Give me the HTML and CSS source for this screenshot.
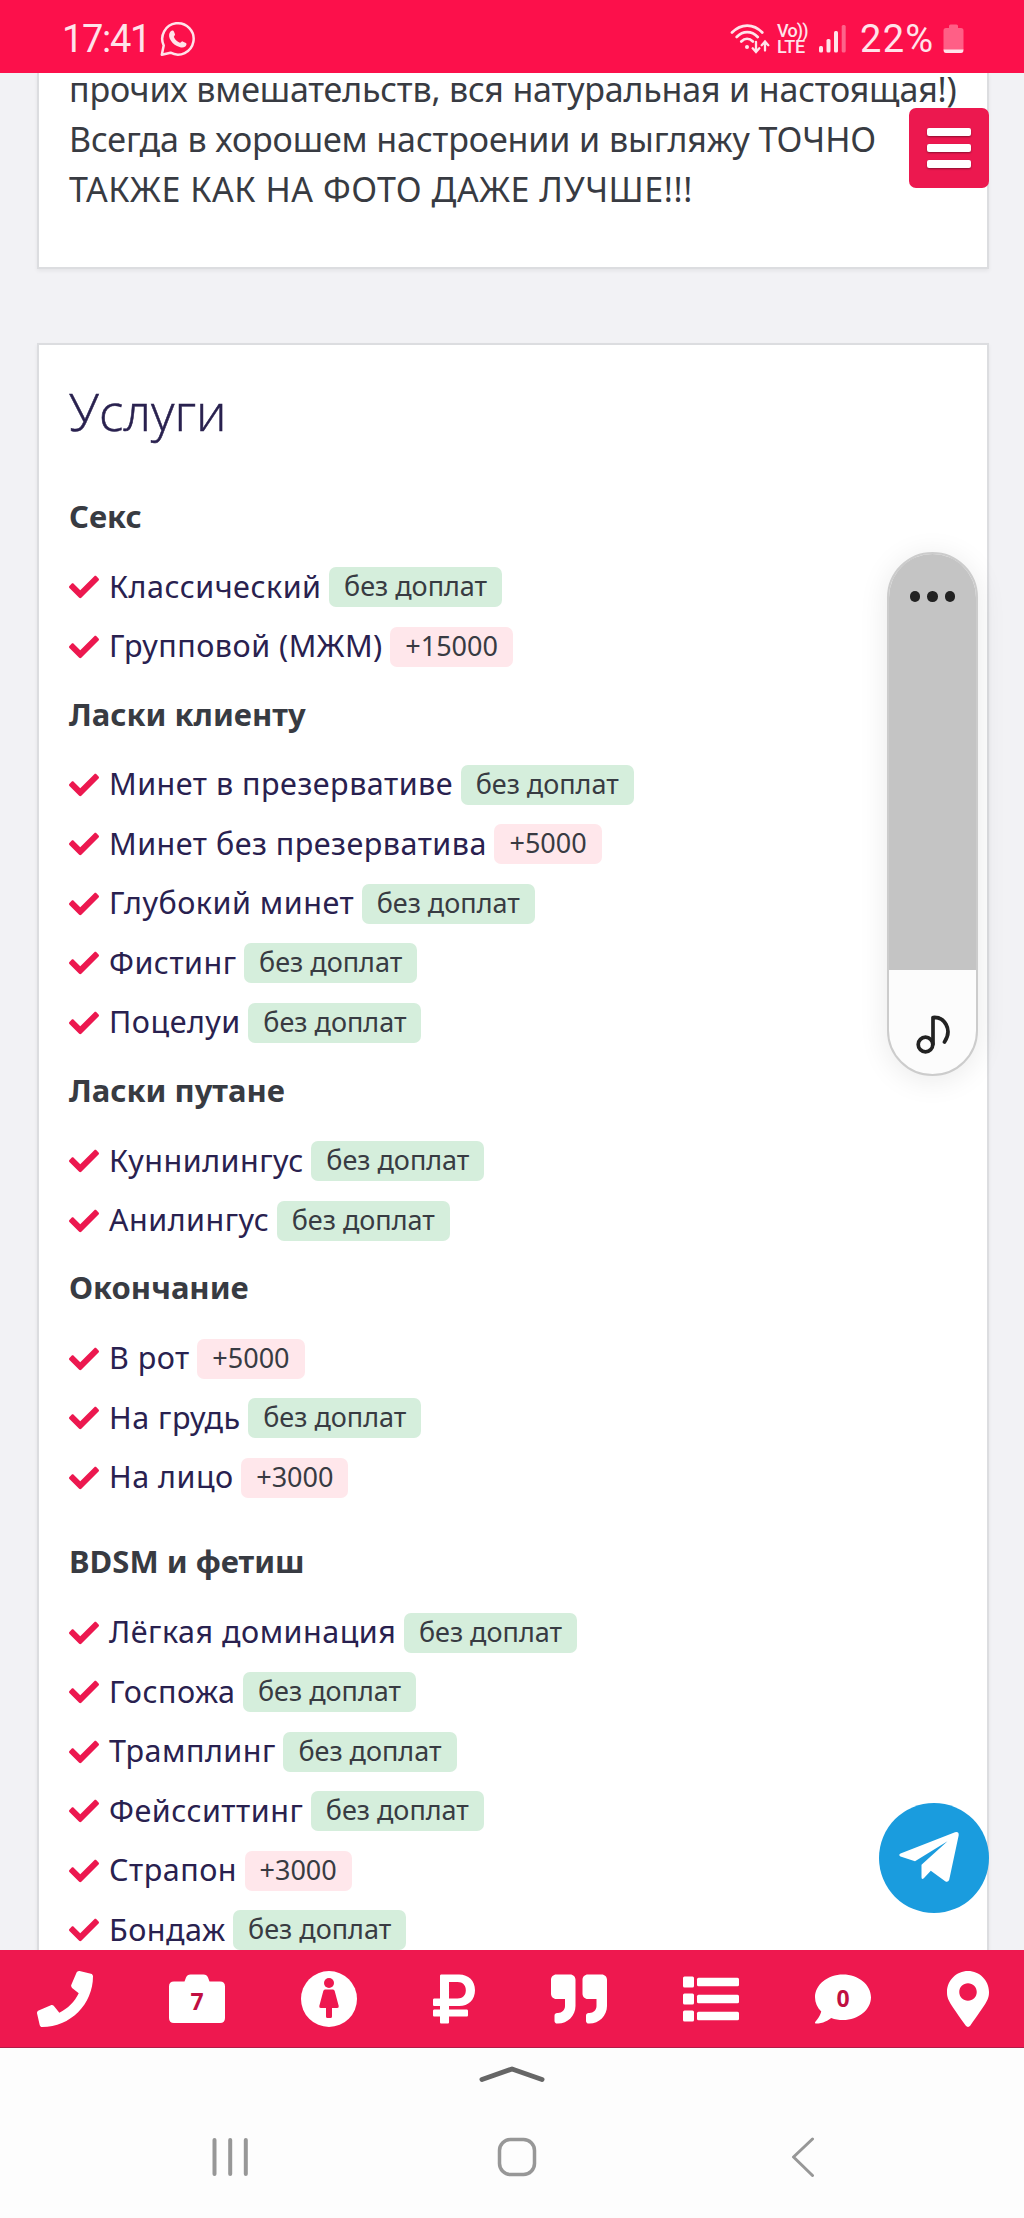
FILE: index.html
```html
<!DOCTYPE html>
<html lang="ru">
<head>
    <meta charset="UTF-8">
    <meta name="viewport" content="width=device-width, initial-scale=1.0">
    <title>Услуги</title>
    <link rel="stylesheet" href="styles.css">
</head>
<body>
    <svg width="0" height="0" class="sprite">
        <symbol id="check" viewBox="0 0 512 512">
            <path d="M173.898 439.404l-166.4-166.4c-9.997-9.997-9.997-26.206 0-36.204l36.203-36.204c9.997-9.998 26.207-9.998 36.204 0L192 312.69 432.095 72.596c9.997-9.997 26.207-9.997 36.204 0l36.203 36.204c9.997 9.997 9.997 26.206 0 36.204l-294.4 294.401c-9.998 9.997-26.207 9.997-36.204-.001z"/>
        </symbol>
    </svg>

    <header class="status-bar">
        <span class="clock">17:41</span>
        <svg class="whatsapp" viewBox="0 0 36 36" width="36" height="36">
            <path d="M1.800 33.800l1.900-9.300A15.700 15.700 0 1 1 10.500 31.700z" fill="none" stroke="#ffe3ea" stroke-width="2.500" stroke-linejoin="round"/>
            <path d="M10.500 10.500c1.600-1.700 2.900-1.300 3.500.2l1 2.500c.3.900-1.400 2.100-1.100 2.700 1.300 2.800 3.200 4.600 6 5.800.8.300 1.800-1.600 2.700-1.300l3.300 1.500c1.300.7.300 2.700-.6 3.600-2 1.800-5.300 1.200-8.300-.4-3.200-1.700-5.900-4.500-7.300-7.700-1-2.600-.8-5.100.8-6.900z" fill="#ffe3ea"/>
        </svg>
        <div class="status-icons">
            <svg viewBox="0 0 40 32" width="40" height="32" fill="none" stroke="#ffe3ea" stroke-width="2.700" stroke-linecap="round">
                <path d="M2 9.500C11 .2 23.500.2 32.300 9.500M6.700 14C13 7.500 21.500 7.500 27.700 14M11.300 18.500c3.500-3.500 8-3.500 11.600 0"/>
                <circle cx="17" cy="24" r="2" fill="#ffe3ea" stroke="none"/>
                <path d="M26 19v9.500m-3.300-3.200L26 29l3.300-3.700M35 27.500v-9m-3.300 3.700L35 18.500l3.300 3.700" stroke-width="2.300"/>
            </svg>
            <div class="volte"><span>Vo))</span><span class="lte">LTE</span></div>
            <svg class="signal" viewBox="0 0 28 30" width="28" height="30" fill="#ffe3ea">
                <rect x="0" y="22" width="4" height="6.500" rx="1.500"/>
                <rect x="7.500" y="15" width="4" height="13.500" rx="1.500"/>
                <rect x="15" y="7" width="4" height="21.500" rx="1.500"/>
                <rect x="22.700" y="1" width="4" height="27.500" rx="1.500" opacity=".4"/>
            </svg>
            <span class="percent">22%</span>
            <svg viewBox="0 0 21 30" width="21" height="30">
                <path d="M6 4V2q0-1.500 1.500-1.500h6Q15 .5 15 2v2h3q2.500 0 2.500 2.500V26H.5V6.500Q.5 4 3 4z" fill="#ff5f86"/>
                <path d="M.5 25.500h20q0 3.500-2.500 3.500H3Q.5 29 .5 25.500z" fill="#ffe3ea"/>
            </svg>
        </div>
    </header>

    <main class="content">
        <section class="card about">
            <p>
                <span class="line l1">прочих вмешательств, вся натуральная и настоящая!)</span>
                <span class="line l2">Всегда в хорошем настроении и выгляжу ТОЧНО</span>
                <span class="line l3">ТАКЖЕ КАК НА ФОТО ДАЖЕ ЛУЧШЕ!!!</span>
            </p>
        </section>

        <section class="card services">
            <h2>Услуги</h2>

            <h3>Секс</h3>
            <ul>
                <li><svg class="check"><use href="#check"/></svg><a>Классический</a><span class="price free">без доплат</span></li>
                <li><svg class="check"><use href="#check"/></svg><a>Групповой (МЖМ)</a><span class="price extra">+15000</span></li>
            </ul>

            <h3>Ласки клиенту</h3>
            <ul>
                <li><svg class="check"><use href="#check"/></svg><a>Минет в презервативе</a><span class="price free">без доплат</span></li>
                <li><svg class="check"><use href="#check"/></svg><a>Минет без презерватива</a><span class="price extra">+5000</span></li>
                <li><svg class="check"><use href="#check"/></svg><a>Глубокий минет</a><span class="price free">без доплат</span></li>
                <li><svg class="check"><use href="#check"/></svg><a>Фистинг</a><span class="price free">без доплат</span></li>
                <li><svg class="check"><use href="#check"/></svg><a>Поцелуи</a><span class="price free">без доплат</span></li>
            </ul>

            <h3>Ласки путане</h3>
            <ul>
                <li><svg class="check"><use href="#check"/></svg><a>Куннилингус</a><span class="price free">без доплат</span></li>
                <li><svg class="check"><use href="#check"/></svg><a>Анилингус</a><span class="price free">без доплат</span></li>
            </ul>

            <h3>Окончание</h3>
            <ul class="last-in-column">
                <li><svg class="check"><use href="#check"/></svg><a>В рот</a><span class="price extra">+5000</span></li>
                <li><svg class="check"><use href="#check"/></svg><a>На грудь</a><span class="price free">без доплат</span></li>
                <li><svg class="check"><use href="#check"/></svg><a>На лицо</a><span class="price extra">+3000</span></li>
            </ul>

            <h3>BDSM и фетиш</h3>
            <ul>
                <li><svg class="check"><use href="#check"/></svg><a>Лёгкая доминация</a><span class="price free">без доплат</span></li>
                <li><svg class="check"><use href="#check"/></svg><a>Госпожа</a><span class="price free">без доплат</span></li>
                <li><svg class="check"><use href="#check"/></svg><a>Трамплинг</a><span class="price free">без доплат</span></li>
                <li><svg class="check"><use href="#check"/></svg><a>Фейсситтинг</a><span class="price free">без доплат</span></li>
                <li><svg class="check"><use href="#check"/></svg><a>Страпон</a><span class="price extra">+3000</span></li>
                <li><svg class="check"><use href="#check"/></svg><a>Бондаж</a><span class="price free">без доплат</span></li>
            </ul>
        </section>
    </main>

    <nav class="tab-bar">
        <svg viewBox="0 0 512 512" width="56" height="56"><path d="M493.400 24.600l-104-24c-11.300-2.600-22.900 3.300-27.500 13.900l-48 112c-4.200 9.800-1.400 21.300 6.900 28l60.600 49.600c-36 76.700-98.900 140.500-177.200 177.200l-49.600-60.600c-6.800-8.300-18.200-11.100-28-6.900l-112 48C3.900 366.500-2 378.100.6 389.400l24 104C27.100 504.200 36.700 512 48 512c256.100 0 464-207.500 464-464 0-11.200-7.700-20.900-18.600-23.400z"/></svg>
        <svg viewBox="0 0 56 56" width="56" height="56">
            <path d="M5 10.500h10.500l1.500-4q1.200-3 4.500-3h13q3.300 0 4.500 3l1.500 4H51q5 0 5 5v31.500q0 5-5 5H5q-5 0-5-5V15.500q0-5 5-5z"/>
            <text class="count" x="28" y="38.500">7</text>
        </svg>
        <svg viewBox="0 0 56 56" width="56" height="56">
            <circle cx="28" cy="28" r="28"/>
            <g class="cut">
                <circle cx="28" cy="12" r="5"/>
                <path d="M24 18.500h8q1.300 0 1.700 1.500l4 15q.4 2-1.500 2H31v8.500q0 1.500-1.500 1.500h-3q-1.500 0-1.500-1.500V37h-5.200q-1.900 0-1.500-2l4-15q.4-1.500 1.700-1.500z"/>
            </g>
        </svg>
        <svg viewBox="0 0 384 512" width="42" height="56"><path d="M239.360 320C324.480 320 384 260.542 384 175.071S324.480 32 239.360 32H76c-6.627 0-12 5.373-12 12v206.632H12c-6.627 0-12 5.373-12 12V308c0 6.627 5.373 12 12 12h52v32H12c-6.627 0-12 5.373-12 12v40c0 6.627 5.373 12 12 12h52v52c0 6.627 5.373 12 12 12h58.560c6.627 0 12-5.373 12-12v-52H308c6.627 0 12-5.373 12-12v-40c0-6.627-5.373-12-12-12H146.560v-32h92.800zm-92.800-219.252h78.720c46.720 0 74.880 29.110 74.880 74.323 0 45.832-28.160 75.561-76.160 75.561h-77.440V100.748z"/></svg>
        <svg viewBox="0 0 512 512" width="56" height="56"><path d="M464 32H336c-26.500 0-48 21.500-48 48v128c0 26.500 21.500 48 48 48h80v64c0 35.300-28.700 64-64 64h-8c-13.300 0-24 10.700-24 24v48c0 13.300 10.700 24 24 24h8c88.400 0 160-71.600 160-160V80c0-26.500-21.500-48-48-48zm-288 0H48C21.500 32 0 53.500 0 80v128c0 26.500 21.500 48 48 48h80v64c0 35.300-28.700 64-64 64h-8c-13.300 0-24 10.700-24 24v48c0 13.300 10.700 24 24 24h8c88.400 0 160-71.600 160-160V80c0-26.500-21.500-48-48-48z"/></svg>
        <svg viewBox="0 0 56 56" width="56" height="56">
            <rect x="0" y="5.500" width="11" height="11" rx="1.500"/><rect x="14" y="6.700" width="42" height="8.500" rx="1.500"/>
            <rect x="0" y="22.500" width="11" height="11" rx="1.500"/><rect x="14" y="23.700" width="42" height="8.500" rx="1.500"/>
            <rect x="0" y="39.500" width="11" height="11" rx="1.500"/><rect x="14" y="40.700" width="42" height="8.500" rx="1.500"/>
        </svg>
        <svg viewBox="0 0 512 512" width="56" height="56">
            <path d="M256 32C114.600 32 0 125.100 0 240c0 49.600 21.400 95 57 130.700C44.500 421.100 2.700 466 2.200 466.500c-2.200 2.300-2.800 5.700-1.500 8.700S4.800 480 8 480c66.300 0 116-31.800 140.600-51.400 32.700 12.300 69 19.400 107.400 19.400 141.400 0 256-93.100 256-208S397.400 32 256 32z"/>
            <text class="count comments" x="256" y="331">0</text>
        </svg>
        <svg viewBox="0 0 384 512" width="42" height="56"><path d="M172.268 501.670C26.970 291.031 0 269.413 0 192 0 85.961 85.961 0 192 0s192 85.961 192 192c0 77.413-26.970 99.031-172.268 309.670-9.535 13.774-29.930 13.773-39.464 0zM192 272c44.183 0 80-35.817 80-80s-35.817-80-80-80-80 35.817-80 80 35.817 80 80 80z"/></svg>
    </nav>

    <footer class="system-nav">
        <svg class="handle" viewBox="0 0 68 18" width="68" height="18"><path d="M4 14.500L34 4l30 10.500" fill="none" stroke="#666" stroke-width="5" stroke-linecap="round" stroke-linejoin="round"/></svg>
        <div class="system-buttons">
            <svg viewBox="0 0 40 40" width="40" height="40"><path d="M4.500 3v34M20.200 3v34M35.800 3v34" stroke-width="4"/></svg>
            <svg viewBox="0 0 40 40" width="40" height="40"><rect x="2.500" y="2.500" width="35" height="35" rx="11"/></svg>
            <svg viewBox="0 0 40 40" width="40" height="40"><path d="M29.500 2L10.500 20l19 18.500" stroke-width="3"/></svg>
        </div>
    </footer>

    <button class="menu-button"><i></i><i></i><i></i></button>

    <div class="volume">
        <div class="volume-level"><i></i><i></i><i></i></div>
        <svg viewBox="0 0 34 39" width="34" height="39" fill="none" stroke="#222" stroke-width="3.700" stroke-linecap="round" stroke-linejoin="round">
            <circle cx="9.500" cy="29.500" r="7.300"/>
            <path d="M17 29V2.500C28 1.500 37 14 28.500 27"/>
        </svg>
    </div>

    <a class="telegram">
        <svg viewBox="0 0 110 110" width="110" height="110">
            <path d="M21.500 50.500L76 29.300q4-1 3.700 3l-9.500 44.500q-1.200 3-4 1.500L51.800 67.800l-7 7.500q-2.300 1.800-2.300-1V61.700L68.500 38.200 36 58.200 21.500 53.500q-2.500-1.500 0-3z" fill="#fff"/>
        </svg>
    </a>
</body>
</html>
```
FILE: styles.css
```css
* {
    box-sizing: border-box;
}

body {
    position: relative;
    display: flex;
    flex-direction: column;
    width: 1024px;
    height: 2218px;
    margin: 0;
    overflow: hidden;
    background: #f2f2f5;
    color: #383b42;
    font-family: "Noto Sans", "Open Sans", sans-serif;
}

svg {
    display: block;
    flex: none;
}

.sprite {
    position: absolute;
}

/* status bar */
.status-bar {
    flex: none;
    display: flex;
    align-items: center;
    height: 73px;
    padding: 5px 60px 0 62px;
    background: #fc104b;
    color: #ffe3ea;
    font-family: Roboto, sans-serif;
    font-size: 38px;
}

.clock {
    letter-spacing: -1.3px;
}

.whatsapp {
    margin-left: 10px;
}

.status-icons {
    display: flex;
    align-items: center;
    margin-left: auto;
}

.volte {
    display: flex;
    flex-direction: column;
    width: 31px;
    margin-left: 7px;
    font-size: 18px;
    font-weight: 500;
    line-height: 16px;
    letter-spacing: -0.8px;
    white-space: nowrap;
}

.lte {
    letter-spacing: -0.3px;
}

.signal {
    margin-left: 11px;
}

.percent {
    width: 96px;
    padding-left: 13px;
    letter-spacing: 1.3px;
}

/* page */
.content {
    flex: 1;
    min-height: 0;
    overflow: hidden;
    padding: 0 35px 0 37px;
}

.card {
    background: #fff;
    border: 2px solid #dcdde0;
    box-shadow: 0 2px 4px rgba(0, 0, 0, 0.06);
    padding: 0 30px;
}

.about {
    height: 196px;
    border-top: 0;
}

.about p {
    margin: 0;
    position: relative;
    top: -9px;
    font-size: 34px;
    line-height: 50px;
}

.line {
    display: block;
    white-space: nowrap;
}

.l1 {
    letter-spacing: -0.18px;
}

.l2 {
    letter-spacing: -0.1px;
}

.l3 {
    letter-spacing: 0.55px;
}

.services {
    margin-top: 74px;
    height: 1700px;
}

h2 {
    margin: 0;
    padding-top: 31px;
    height: 134px;
    font-family: "Open Sans", "Noto Sans", sans-serif;
    font-size: 51px;
    font-weight: 300;
    line-height: 70px;
    color: #29214f;
    -webkit-text-stroke: 0.5px #29214f;
}

h3 {
    margin: 0;
    height: 78.6px;
    font-size: 31px;
    font-weight: 700;
    line-height: 75px;
}

ul {
    margin: 0;
    padding: 0;
    list-style: none;
}

.last-in-column {
    margin-bottom: 17px;
}

li {
    display: flex;
    align-items: center;
    height: 59.5px;
    font-size: 30.5px;
    line-height: 40px;
    color: #29214f;
}

li a {
    margin: -3px 7.5px 0 10px;
    letter-spacing: 0.5px;
    white-space: nowrap;
}

.check {
    width: 30px;
    height: 30px;
    fill: #ec184f;
}

.price {
    height: 40px;
    padding: 0 15px;
    border-radius: 7px;
    font-size: 27px;
    line-height: 38px;
    color: #383b42;
    white-space: nowrap;
}

.free {
    background: #d5eedc;
}

.extra {
    background: #ffe7eb;
}

/* bottom bar */
.tab-bar {
    flex: none;
    display: flex;
    align-items: center;
    justify-content: space-between;
    height: 98px;
    padding: 0 35px 0 37px;
    background: #ee184f;
    border-bottom: 1px solid #b01c48;
    fill: #fff;
}

.tab-bar .cut {
    fill: #ee184f;
}

.count {
    fill: #c00f42;
    font-size: 23px;
    font-weight: 700;
    text-anchor: middle;
}

.comments {
    font-size: 210px;
}

.system-nav {
    flex: none;
    height: 170px;
    padding-top: 17px;
    background: #fdfdfd;
}

.handle {
    margin: 0 auto;
}

.system-buttons {
    display: flex;
    justify-content: space-between;
    padding: 54px 201px 0 210px;
    fill: none;
    stroke: #979797;
    stroke-width: 3.5;
    stroke-linecap: round;
    stroke-linejoin: round;
}

/* floating controls */
.menu-button {
    position: absolute;
    top: 108px;
    right: 35px;
    display: flex;
    flex-direction: column;
    align-items: center;
    justify-content: center;
    gap: 8px;
    width: 80px;
    height: 80px;
    padding: 0 0 1px;
    border: 0;
    border-radius: 7px;
    background: #ec184f;
}

.menu-button i {
    flex: none;
    width: 44px;
    height: 8px;
    border-radius: 2px;
    background: #fff;
    box-shadow: 0 1px 2px rgba(0, 0, 0, 0.4);
}

.volume {
    position: absolute;
    top: 552px;
    left: 887px;
    display: flex;
    flex-direction: column;
    align-items: center;
    width: 91px;
    height: 524px;
    overflow: hidden;
    border: 2px solid #ccc;
    border-radius: 46px;
    background: #fcfcfc;
    box-shadow: 0 4px 30px rgba(0, 0, 0, 0.09);
}

.volume-level {
    flex: none;
    display: flex;
    justify-content: center;
    gap: 7px;
    width: 100%;
    height: 416px;
    margin-bottom: 45px;
    padding-top: 37px;
    background: #c4c4c4;
}

.volume-level i {
    width: 10.5px;
    height: 10.5px;
    border-radius: 50%;
    background: #222;
}

.telegram {
    position: absolute;
    top: 1803px;
    left: 879px;
    border-radius: 50%;
    background: #1a9cde;
}
```
